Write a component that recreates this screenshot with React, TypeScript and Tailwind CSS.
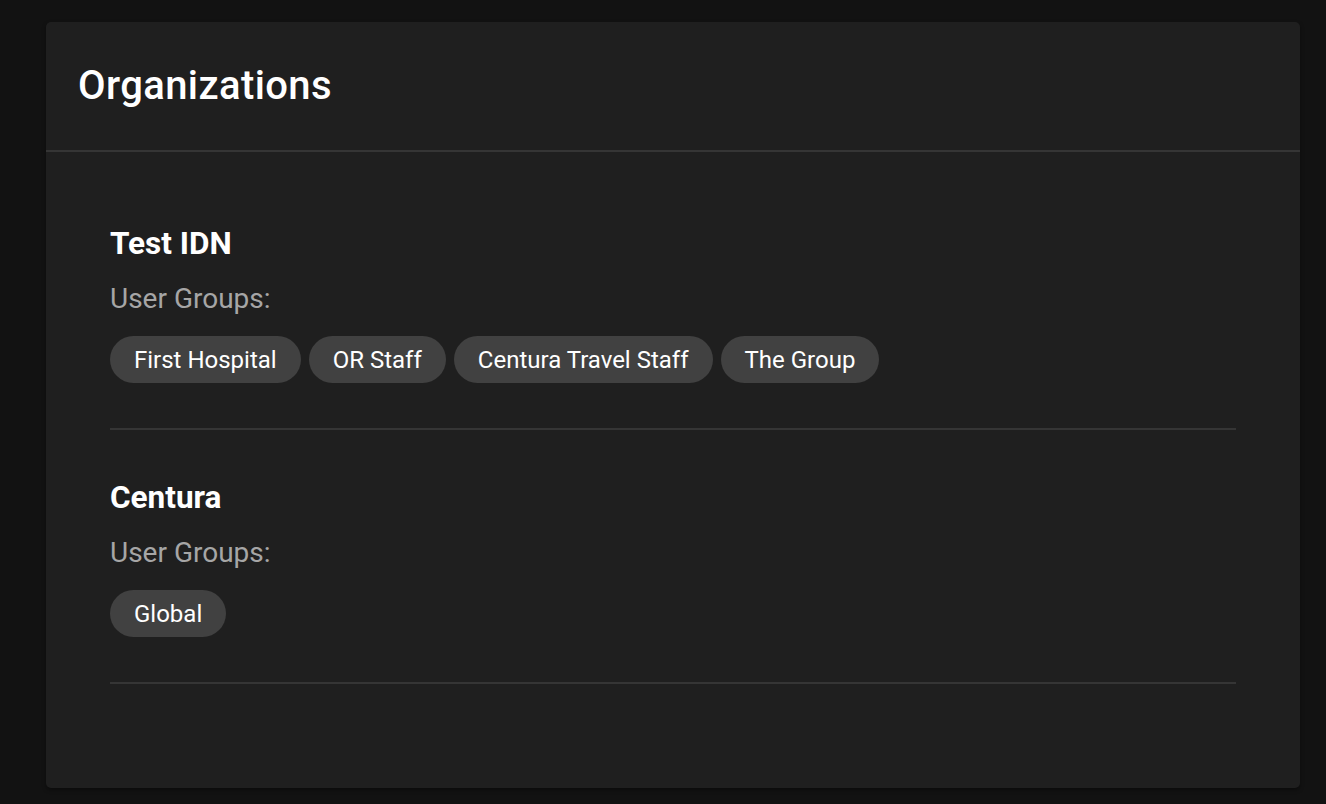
import clsx from "clsx";

/* Data */

type Organization = {
  name: string;
  groups: string[];
};

const ORGANIZATIONS: Organization[] = [
  { name: "Test IDN", groups: ["First Hospital", "OR Staff", "Centura Travel Staff", "The Group"] },
  { name: "Centura", groups: ["Global"] },
];

const FONT = "font-['Roboto','Liberation_Sans',sans-serif]";

/* Pieces */

function GroupChip({ label }: { label: string }) {
  return (
    <li className="flex h-[47px] items-center rounded-full bg-[#414141] px-6 text-[24px] leading-none text-white">
      {label}
    </li>
  );
}

function OrganizationSection({ org }: { org: Organization }) {
  return (
    <section className="border-b-2 border-[#353535] pt-[50px] pb-[45px]">
      <h3 className="text-[31.5px] leading-[36px] font-bold text-white">{org.name}</h3>
      <p className="mt-[21px] text-[28px] leading-[32px] text-[#a6a6a6]">User Groups:</p>
      <ul className="mt-[21px] flex flex-row flex-wrap gap-2">
        {org.groups.map((group, index) => (
          <GroupChip key={`group-${index}`} label={group} />
        ))}
      </ul>
    </section>
  );
}

/* Page */

export default function App() {
  return (
    <div className={clsx("min-h-[804px] bg-[#121212] pt-[22px] pl-[46px]", FONT)}>
      <div className="w-[1254px] rounded-[5px] bg-[#1f1f1f] shadow-[0_2px_4px_rgba(0,0,0,0.4)]">
        {/* Header */}
        <header className="flex h-[130px] items-center border-b-2 border-[#353535] px-8">
          <h2 className="text-[40px] leading-none font-medium tracking-[0.4px] text-white">Organizations</h2>
        </header>
        {/* Body */}
        <div className="px-16 pt-[24px] pb-[104px]">
          {ORGANIZATIONS.map((org, index) => (
            <OrganizationSection key={`org-${index}`} org={org} />
          ))}
        </div>
      </div>
    </div>
  );
}
